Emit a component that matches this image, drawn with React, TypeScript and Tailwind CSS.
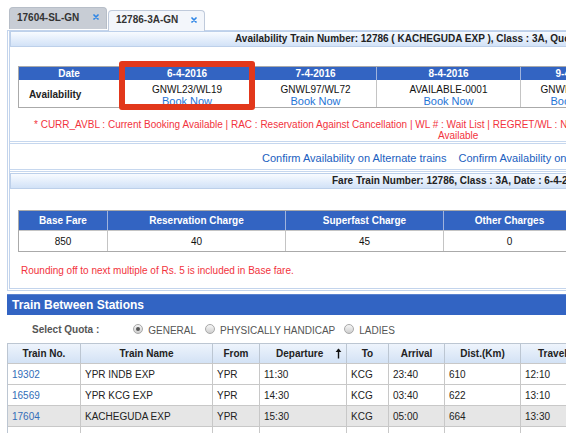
import React from "react";

const Cross = () => (
  <svg width="6" height="6" viewBox="0 0 6 6" className="block">
    <path d="M1 1L5 5M5 1L1 5" stroke="#2f86e6" strokeWidth="1.7" strokeLinecap="round" />
  </svg>
);

const UpArrow = () => (
  <svg width="7" height="11" viewBox="0 0 7 11" className="block">
    <path d="M3.5 1V10.5" stroke="#111" strokeWidth="1.4" />
    <path d="M0.6 4L3.5 0.6L6.4 4Z" fill="#111" />
  </svg>
);

const Radio = ({ checked }: { checked?: boolean }) => (
  <span className="flex h-[10px] w-[10px] items-center justify-center rounded-full border border-[#a8a8a8] bg-linear-to-b from-[#f6f6f6] to-[#cfcfcf]">
    {checked && <span className="h-[4px] w-[4px] rounded-full bg-[#555]" />}
  </span>
);

const dateCols = [
  { w: "w-[101px]", head: "Date" },
  { w: "w-[135px]", head: "6-4-2016", status: "GNWL23/WL19" },
  { w: "w-[122px]", head: "7-4-2016", status: "GNWL97/WL72" },
  { w: "w-[144px]", head: "8-4-2016", status: "AVAILABLE-0001" },
  { w: "w-[110px]", head: "9-4-2016", status: "GNWL98/WL73" },
  { w: "w-[110px]", head: "10-4-2016", status: "GNWL99/WL74" },
];

const fareCols = [
  { w: "w-[89px]", head: "Base Fare", val: "850" },
  { w: "w-[178px]", head: "Reservation Charge", val: "40" },
  { w: "w-[158px]", head: "Superfast Charge", val: "45" },
  { w: "w-[132px]", head: "Other Charges", val: "0" },
  { w: "w-[132px]", head: "Total Fare", val: "935" },
];

const trainCols = [
  "w-[73px]",
  "w-[132px]",
  "w-[47px]",
  "w-[87px]",
  "w-[42px]",
  "w-[56px]",
  "w-[76px]",
  "w-[90px]",
];

const trainRows = [
  ["19302", "YPR INDB EXP", "YPR", "11:30", "KCG", "23:40", "610", "12:10"],
  ["16569", "YPR KCG EXP", "YPR", "14:30", "KCG", "03:40", "622", "13:10"],
  ["17604", "KACHEGUDA EXP", "YPR", "15:30", "KCG", "05:00", "664", "13:30"],
  ["12786", "KACHEGUDA EXP", "YPR", "19:00", "KCG", "07:25", "664", "12:25"],
];

export default function App() {
  return (
    <div className="relative h-[433px] w-[566px] overflow-hidden bg-white font-['Liberation_Sans',Arial,sans-serif] text-[10px] text-[#222]">
      <div className="w-[960px]">
        {/* Tabs */}
        <div className="flex h-[30px] items-end pl-[9px]">
          <div className="mb-[1px] flex h-[22px] w-[98px] items-start justify-between rounded-t-[4px] border border-b-0 border-[#b7bec8] bg-[#c8cdd5] px-[7px] pt-[3px]">
            <span className="font-bold leading-[14px] text-[#333]">17604-SL-GN</span>
            <span className="mt-[3px]">
              <Cross />
            </span>
          </div>
          <div className="relative z-10 -mb-[1px] ml-[1px] flex h-[21px] w-[97px] items-start justify-between rounded-t-[4px] border border-b-0 border-[#bfcadb] bg-[#f3f6fb] px-[7px] pt-[2px]">
            <span className="font-bold leading-[14px] text-[#333]">12786-3A-GN</span>
            <span className="mt-[4px]">
              <Cross />
            </span>
          </div>
        </div>

        {/* Panel */}
        <div className="ml-[7px] border-b-[3px] border-l-[3px] border-t border-double border-[#c3d4ec]">
          {/* Availability header */}
          <div className="flex h-[16px] items-center border border-[#bdd0ea] bg-linear-to-b from-[#f8fbff] to-[#d2e2f7] pl-[224px]">
            <span className="whitespace-nowrap font-bold leading-[14px] text-[#222]">
              Availability Train Number: 12786 ( KACHEGUDA EXP ), Class : 3A, Quota : GENERAL
            </span>
          </div>

          {/* Date table */}
          <div className="ml-[8px] mt-[19px] w-max border border-[#aaaaaa]">
            <div className="flex h-[13px] bg-[#3364c2]">
              {dateCols.map((c, i) => (
                <div
                  key={i}
                  className={`${c.w} flex items-center justify-center border-r border-[#9fb3dd] font-bold leading-[13px] text-white`}
                >
                  {c.head}
                </div>
              ))}
            </div>
            <div className="flex h-[27px]">
              {dateCols.map((c, i) =>
                i === 0 ? (
                  <div key={i} className={`${c.w} flex items-center border-r border-[#c4c4c4] pl-[10px] pt-[2px] font-bold`}>
                    Availability
                  </div>
                ) : (
                  <div key={i} className={`${c.w} flex flex-col items-center border-r border-[#c4c4c4] pt-[4px]`}>
                    <span className="leading-[12px] text-[#111]">{c.status}</span>
                    <span className="text-[11px] leading-[11px] text-[#1f74d6]">Book Now</span>
                  </div>
                )
              )}
            </div>
          </div>

          {/* Legend */}
          <div className="pt-[11px] text-[10px] leading-[11px] text-[#f2333d]">
            <div className="whitespace-nowrap pl-[24px]">
              * CURR_AVBL : Current Booking Available | RAC : Reservation Against Cancellation | WL # : Wait List | REGRET/WL : No More Booking Permitted | NOT AVAILABLE/TRAIN CANCELLED : Not
            </div>
            <div className="whitespace-nowrap pl-[428px]">Available</div>
          </div>

          {/* Confirm links */}
          <div className="flex h-[31px] items-center gap-[12px] border-y-[3px] border-double border-[#c6d7ee] pl-[252px] pt-[3px] text-[11px] text-[#2160c0]">
            <span className="whitespace-nowrap">Confirm Availability on Alternate trains</span>
            <span className="whitespace-nowrap">Confirm Availability on Alternate Class</span>
          </div>

          {/* Fare header */}
          <div className="mt-[1px] flex h-[16px] items-center border border-[#bdd0ea] bg-linear-to-b from-[#f8fbff] to-[#d2e2f7] pl-[321px]">
            <span className="whitespace-nowrap font-bold leading-[14px] text-[#222]">
              Fare Train Number: 12786, Class : 3A, Date : 6-4-2016, Quota : GENERAL
            </span>
          </div>

          {/* Fare table */}
          <div className="ml-[8px] mt-[21px] w-max border border-[#aaaaaa]">
            <div className="flex h-[19px] bg-[#3364c2]">
              {fareCols.map((c, i) => (
                <div
                  key={i}
                  className={`${c.w} flex items-center justify-center border-r border-[#9fb3dd] font-bold text-white`}
                >
                  {c.head}
                </div>
              ))}
            </div>
            <div className="flex h-[21px] border-t border-[#c4c4c4]">
              {fareCols.map((c, i) => (
                <div key={i} className={`${c.w} flex items-center justify-center border-r border-[#c4c4c4] text-[#111]`}>
                  {c.val}
                </div>
              ))}
            </div>
          </div>

          {/* Rounding note */}
          <div className="mt-[13px] pb-[11px] pl-[11px] leading-[12px] text-[#f2333d]">
            Rounding off to next multiple of Rs. 5 is included in Base fare.
          </div>
        </div>

        {/* Train Between Stations */}
        <div className="ml-[7px] mt-[3px] flex h-[21px] items-center border-t border-[#5a82cf] bg-[#3264c3] pl-[5px]">
          <span className="text-[12px] font-bold text-white">Train Between Stations</span>
        </div>

        {/* Quota */}
        <div className="flex h-[28px] items-center pl-[32px] text-[#555]">
          <span className="font-bold">Select Quota :</span>
          <span className="ml-[34px] flex items-center">
            <Radio checked />
            <span className="ml-[5px] mt-[3px]">GENERAL</span>
          </span>
          <span className="ml-[9px] flex items-center">
            <Radio />
            <span className="ml-[5px] mt-[3px]">PHYSICALLY HANDICAP</span>
          </span>
          <span className="ml-[9px] flex items-center">
            <Radio />
            <span className="ml-[5px] mt-[3px]">LADIES</span>
          </span>
        </div>

        {/* Train table */}
        <div className="ml-[7px] w-max border-l border-t border-[#bcc6d2]">
          <div className="flex h-[19px] bg-linear-to-b from-[#eef4fc] to-[#d3e2f5]">
            {["Train No.", "Train Name", "From", "Departure", "To", "Arrival", "Dist.(Km)", "Travel Time"].map(
              (h, i) =>
                i === 3 ? (
                  <div key={i} className={`${trainCols[i]} flex items-center border-r border-[#bcc6d2] pl-[16px] font-bold`}>
                    <span>{h}</span>
                    <span className="ml-[12px]">
                      <UpArrow />
                    </span>
                  </div>
                ) : (
                  <div key={i} className={`${trainCols[i]} flex items-center justify-center whitespace-nowrap border-r border-[#bcc6d2] font-bold`}>
                    {h}
                  </div>
                )
            )}
          </div>
          {trainRows.map((r, ri) => (
            <div key={ri} className={`flex h-[21px] border-t border-[#c8c8c8] ${ri === 2 ? "bg-[#e6e6e6]" : "bg-white"}`}>
              {r.map((v, i) => (
                <div
                  key={i}
                  className={`${trainCols[i]} flex items-center border-r border-[#c8c8c8] pl-[4px] ${i === 0 ? "text-[#326db8]" : "text-[#222]"}`}
                >
                  {v}
                </div>
              ))}
            </div>
          ))}
        </div>
      </div>

      {/* Highlight annotation */}
      <div className="absolute left-[119px] top-[61px] h-[49px] w-[136px] rounded-[3px] border-[6px] border-[#e2381b]" />
    </div>
  );
}
